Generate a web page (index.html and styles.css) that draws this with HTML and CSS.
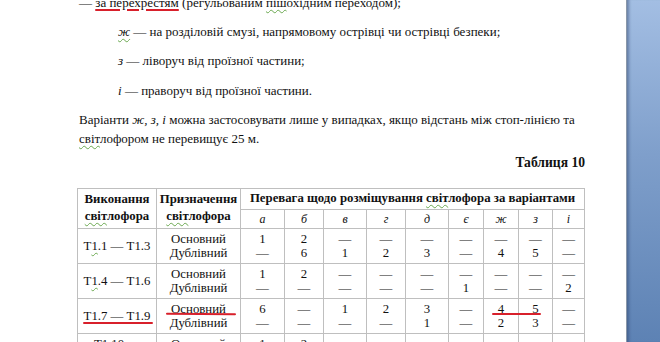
FILE: index.html
```html
<!DOCTYPE html>
<html lang="uk">
<head>
<meta charset="utf-8">
<title>Таблиця 10</title>
<link rel="stylesheet" href="styles.css">
</head>
<body>
<div class="screen">
  <div class="page">
    <div class="content">
      <p class="item first">— <span class="red-line">за перехрестям</span> (регульованим <span class="spell">піш</span>охідним переходом);</p>
      <p class="item sub"><i class="spell">ж</i> — на розділовій смузі, напрямовому острівці чи острівці безпеки;</p>
      <p class="item sub"><i>з</i> — ліворуч від проїзної частини;</p>
      <p class="item sub"><i>і</i> — праворуч від проїзної частини.</p>
      <p class="para">Варіанти <i>ж, з, і</i> можна застосовувати лише у випадках, якщо відстань між стоп-лінією та<br><span class="spell">світ</span>лофором не перевищує 25 м.</p>
      <p class="caption">Таблиця 10</p>
      <div class="table-wrap">
        <table class="grid">
          <colgroup>
            <col class="c1"><col class="c2">
            <col class="ca"><col class="cb"><col class="cv"><col class="cg"><col class="cd"><col class="ce"><col class="czh"><col class="cz"><col class="ci">
          </colgroup>
          <thead>
            <tr class="h1">
              <th rowspan="2">Виконання<br><span class="spell">світ</span>лофора</th>
              <th rowspan="2">Призначення<br><span class="spell">світ</span>лофора</th>
              <th colspan="9">Перевага щодо розміщування <span class="spell">світ</span>лофора за варіантами</th>
            </tr>
            <tr class="h2">
              <td>а</td><td>б</td><td>в</td><td>г</td><td>д</td><td>є</td><td>ж</td><td>з</td><td>і</td>
            </tr>
          </thead>
          <tbody>
            <tr>
              <td>Т<span class="spell">1</span>.1 — Т1.3</td>
              <td>Основний<br>Дублівний</td>
              <td>1<br>—</td><td>2<br>6</td><td>—<br>1</td><td>—<br>2</td><td>—<br>3</td><td>—<br>—</td><td>—<br>4</td><td>—<br>5</td><td>—<br>—</td>
            </tr>
            <tr>
              <td>Т<span class="spell">1</span>.4 — Т1.6</td>
              <td>Основний<br>Дублівний</td>
              <td>1<br>—</td><td>2<br>—</td><td>—<br>—</td><td>—<br>—</td><td>—<br>—</td><td>—<br>1</td><td>—<br>—</td><td>—<br>—</td><td>—<br>2</td>
            </tr>
            <tr>
              <td>Т1.7 — Т1.9</td>
              <td>Основний<br>Дублівний</td>
              <td>6<br>—</td><td>—<br>—</td><td>1<br>—</td><td>2<br>—</td><td>3<br>1</td><td>—<br>—</td><td>4<br>2</td><td>5<br>3</td><td>—<br>—</td>
            </tr>
            <tr>
              <td>Т1.10 — Т1.12</td>
              <td>Основний<br>Дублівний</td>
              <td>1<br>—</td><td>2<br>—</td><td>—<br>—</td><td>—<br>—</td><td>—<br>—</td><td>—<br>—</td><td>—<br>—</td><td>—<br>—</td><td>—<br>—</td>
            </tr>
          </tbody>
        </table>
        <span class="mark mark-t17"></span>
        <span class="mark mark-osn"></span>
        <span class="mark mark-45"></span>
      </div>
    </div>
  </div>
  <div class="sidebar"></div>
</div>
</body>
</html>
```

FILE: styles.css
```css
html, body {
  margin: 0;
  padding: 0;
  background: #ffffff;
}

.screen {
  display: flex;
  width: 660px;
  height: 342px;
  overflow: hidden;
}

.page {
  width: 626px;
  flex: none;
  background: #ffffff;
  overflow: hidden;
}

.content {
  padding-left: 79px;
  width: 506px;
  margin-top: -12px;
  font-family: "Liberation Serif", "Times New Roman", serif;
  font-size: 13px;
  color: #111111;
}

.content p {
  margin: 0;
  white-space: nowrap;
}

.item {
  line-height: 29.2px;
}

.sub {
  padding-left: 39px;
}

.para {
  margin-top: 5px !important;
  line-height: 19px;
}

.caption {
  margin-top: 5px !important;
  line-height: 19px;
  text-align: right;
  font-weight: bold;
  font-size: 13.6px;
}

.red-line {
  text-decoration: underline;
  text-decoration-color: #d8202b;
  text-decoration-thickness: 2px;
  text-underline-offset: 2px;
}

.spell {
  text-decoration: underline wavy #6aa84f;
  text-decoration-thickness: 1px;
  text-underline-offset: 2px;
}

.table-wrap {
  position: relative;
  margin-top: 16px;
  margin-left: -2px;
}

.grid {
  border-collapse: collapse;
  table-layout: fixed;
  width: 507px;
  font-size: 12.8px;
  color: #111111;
}

.grid th,
.grid td {
  border: 1px solid #bfbfbf;
  padding: 0;
  text-align: center;
  vertical-align: middle;
}

.c1 { width: 79px; }
.c2 { width: 84px; }
.ca { width: 44px; }
.cb { width: 39px; }
.cv { width: 43px; }
.cg { width: 39px; }
.cd { width: 43px; }
.ce { width: 35px; }
.czh { width: 35px; }
.cz { width: 34px; }
.ci { width: 32px; }

.h1 th {
  font-weight: bold;
  font-size: 12.8px;
  line-height: 17px;
  height: 20px;
}

.h2 td {
  height: 18px;
  font-style: italic;
  font-size: 12px;
  line-height: 16px;
}

.grid tbody td {
  height: 34px;
  line-height: 14px;
}

.mark {
  position: absolute;
  height: 2px;
  background: #d8202b;
  border-radius: 1px;
}

.mark-t17 {
  left: 6px;
  width: 70px;
  top: 134px;
}

.mark-osn {
  left: 89px;
  width: 70px;
  top: 125px;
  transform: rotate(0.6deg);
}

.mark-45 {
  left: 415px;
  width: 49px;
  top: 125px;
}

.sidebar {
  flex: 1;
  height: 342px;
  border-left: 1px solid #8a97a8;
  background: linear-gradient(to bottom, #a3bee3 0%, #7f9fcb 45%, #5d82b4 100%);
  box-shadow: inset 4px 0 3px -2px rgba(40, 60, 100, 0.45);
}
```
